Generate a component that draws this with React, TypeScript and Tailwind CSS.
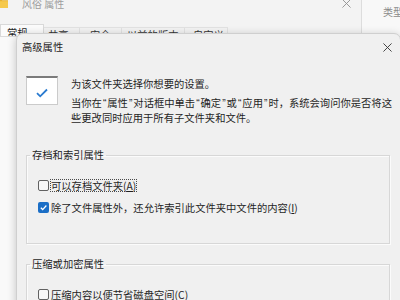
import type { ReactNode } from "react";

function CloseIcon({ color, size }: { color: string; size: number }) {
  return (
    <svg width={size} height={size} viewBox="0 0 10 10" className="shrink-0">
      <path d="M0.5 0.5 9.5 9.5M9.5 0.5 0.5 9.5" stroke={color} strokeWidth="1" fill="none" />
    </svg>
  );
}

function FolderIcon() {
  return (
    <svg width="11" height="10" viewBox="0 0 11 10" className="-ml-[3px] -mt-[2px] shrink-0">
      <path d="M0 1h4l1.2 1.3H11V10H0z" fill="#e8b230" />
      <path d="M0 3.2h11V10H0z" fill="#f6c94c" />
    </svg>
  );
}

function CheckBox({ checked }: { checked?: boolean }) {
  if (checked) {
    return (
      <span className="flex h-[11px] w-[11px] shrink-0 items-center justify-center rounded-[2px] bg-[#1b6ec6]">
        <svg width="9" height="9" viewBox="0 0 10 10">
          <path d="M2 5.3 4.1 7.3 8.2 2.8" stroke="#fff" strokeWidth="1.4" fill="none" />
        </svg>
      </span>
    );
  }
  return <span className="h-[11px] w-[11px] shrink-0 rounded-[2px] border border-[#616161] bg-[#f7f7f7]" />;
}

function Option({ checked, focused, children }: { checked?: boolean; focused?: boolean; children: ReactNode }) {
  return (
    <div className="flex h-[12px] items-center">
      <CheckBox checked={checked} />
      <span
        className={
          focused
            ? "ml-[1px] border border-dotted border-[#4a4a4a] leading-[11px] whitespace-nowrap"
            : "ml-[1px] border border-transparent leading-[11px] whitespace-nowrap"
        }
      >
        {children}
      </span>
    </div>
  );
}

function Group({ title, children }: { title: string; children: ReactNode }) {
  return (
    <fieldset className="border border-[#d7d7d7] pl-[3px] shadow-[inset_1px_1px_0_#fbfbfb,1px_1px_0_#fbfbfb]">
      <legend className="px-[2px] leading-[14px]">{title}</legend>
      <div className="pl-[8px]">{children}</div>
    </fieldset>
  );
}

// 引号用窄字形，和原图一致
function Q({ c }: { c: string }) {
  return <span className="mx-[1px] font-['Liberation_Sans',sans-serif]">{c}</span>;
}

const tabs = [
  { label: "共享", w: "w-[36px]", pl: "pl-[4px]" },
  { label: "安全", w: "w-[42px]", pl: "pl-[10px]" },
  { label: "以前的版本", w: "w-[63px]", pl: "pl-[5px]" },
  { label: "自定义", w: "w-[43px]", pl: "pl-[8px]" },
];

export default function App() {
  return (
    <div className="relative h-[300px] w-[400px] overflow-hidden bg-[#f3f3f3] font-['Noto_Sans_CJK_SC',sans-serif] text-[10.3px] text-[#1f1f1f]">
      {/* 背后的文件夹属性窗口 */}
      <div className="absolute left-0 top-0 flex h-full w-[362px] flex-col border-r border-[#dddddd] bg-[#f3f3f3]">
        <div className="flex h-[24px] items-start">
          <FolderIcon />
          <span className="-mt-[3px] ml-[14px] text-[10px] leading-[13px] text-[#9d9d9d]">风俗 属性</span>
          <span className="-mt-[1px] ml-auto mr-[10px]">
            <CloseIcon color="#8f8f8f" size={9} />
          </span>
        </div>
        <div className="flex h-[12px] items-start">
          <div className="h-[14px] w-[44px] border border-b-0 border-[#d9d9d9] bg-[#fbfbfb] pl-[6px] pt-[2px] leading-[12px]">
            常规
          </div>
          {tabs.map((t) => (
            <div
              key={t.label}
              className={`mt-[3px] h-[12px] border-r border-t border-[#e2e2e2] pt-[1px] leading-[12px] text-[#333] ${t.w} ${t.pl}`}
            >
              {t.label}
            </div>
          ))}
        </div>
        <div className="flex-1 border-t border-[#dadada] bg-[#f9f9f9]" />
      </div>

      {/* 右侧另一个窗口 */}
      <div className="absolute left-[362px] top-0 h-full w-[60px] bg-[#f8f8f8] pl-[21px] pt-[5px] text-[10px] leading-[13px] text-[#8a8a8a]">
        类型
      </div>

      {/* 高级属性对话框 */}
      <div className="absolute left-[16px] top-[33px] h-[290px] w-[385px] rounded-t-[7px] border border-[#cfcfcf] bg-[#f0f0f0] shadow-[0_2px_10px_rgba(0,0,0,0.22)]">
        <div className="flex h-[26px] items-center pl-[5px] pr-[8px]">
          <span className="leading-[14px]">高级属性</span>
          <span className="ml-auto">
            <CloseIcon color="#333333" size={9} />
          </span>
        </div>
        <div className="pl-[9px] pr-[10px] pt-[16px]">
          <div className="flex items-start">
            <div className="flex h-[29px] w-[32px] shrink-0 items-center justify-center border border-t-[2px] border-[#cbcbcb] border-t-[#7b7b7b] bg-white pt-[3px]">
              <svg width="12" height="10" viewBox="0 0 12 10">
                <path d="M1 5.2 4.2 8.3 11 1.5" stroke="#2a7bd0" strokeWidth="1.8" fill="none" />
              </svg>
            </div>
            <div className="ml-[13px] whitespace-nowrap">
              <p className="mt-[1px] leading-[14px]">为该文件夹选择你想要的设置。</p>
              <p className="mt-[5px] leading-[13.5px]">
                当你在<Q c="“" />属性<Q c="”" />对话框中单击<Q c="“" />确定<Q c="”" />或<Q c="“" />应用
                <Q c="”" />时，系统会询问你是否将这
                <br />
                些更改同时应用于所有子文件夹和文件。
              </p>
            </div>
          </div>

          <div className="mt-[24px]">
            <Group title="存档和索引属性">
              <div className="pb-[30px] pt-[17px]">
                <Option focused>
                  可以存档文件夹(<span className="underline">A</span>)
                </Option>
                <div className="mt-[10px]">
                  <Option checked>
                    除了文件属性外，还允许索引此文件夹中文件的内容(<span className="underline">I</span>)
                  </Option>
                </div>
              </div>
            </Group>
          </div>

          <div className="mt-[13px]">
            <Group title="压缩或加密属性">
              <div className="pb-[30px] pt-[17px]">
                <Option>
                  压缩内容以便节省磁盘空间(<span className="underline">C</span>)
                </Option>
              </div>
            </Group>
          </div>
        </div>
      </div>
    </div>
  );
}
